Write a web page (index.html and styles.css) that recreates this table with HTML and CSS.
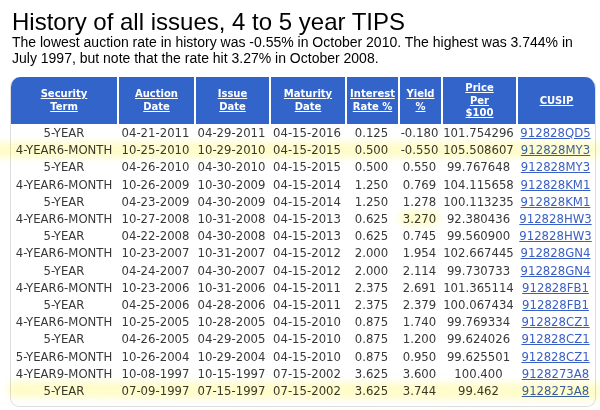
FILE: index.html
```html
<!DOCTYPE html>
<html lang="en">
<head>
<meta charset="utf-8">
<title>History of all issues, 4 to 5 year TIPS</title>
<link rel="stylesheet" href="styles.css">
</head>
<body>
<div class="page">
  <h1 class="title">History of all issues, 4 to 5 year TIPS</h1>
  <p class="intro">The lowest auction rate in history was -0.55% in October 2010. The highest was 3.744% in<br>July 1997, but note that the rate hit 3.27% in October 2008.</p>
  <div class="table-wrap">
    <table class="issues">
      <colgroup>
        <col class="c-term"><col class="c-auction"><col class="c-issue"><col class="c-maturity">
        <col class="c-rate"><col class="c-yield"><col class="c-price"><col class="c-cusip">
      </colgroup>
      <thead>
        <tr>
          <th><a href="#">Security<br>Term</a></th>
          <th><a href="#">Auction<br>Date</a></th>
          <th><a href="#">Issue<br>Date</a></th>
          <th><a href="#">Maturity<br>Date</a></th>
          <th><a href="#">Interest<br>Rate %</a></th>
          <th><a href="#">Yield<br>%</a></th>
          <th><a href="#">Price<br>Per<br>$100</a></th>
          <th><a href="#">CUSIP</a></th>
        </tr>
      </thead>
      <tbody>
        <tr><td>5-YEAR</td><td>04-21-2011</td><td>04-29-2011</td><td>04-15-2016</td><td>0.125</td><td>-0.180</td><td>101.754296</td><td><a href="#">912828QD5</a></td></tr>
        <tr><td>4-YEAR6-MONTH</td><td>10-25-2010</td><td>10-29-2010</td><td>04-15-2015</td><td>0.500</td><td>-0.550</td><td>105.508607</td><td><a href="#">912828MY3</a></td></tr>
        <tr><td>5-YEAR</td><td>04-26-2010</td><td>04-30-2010</td><td>04-15-2015</td><td>0.500</td><td>0.550</td><td>99.767648</td><td><a href="#">912828MY3</a></td></tr>
        <tr><td>4-YEAR6-MONTH</td><td>10-26-2009</td><td>10-30-2009</td><td>04-15-2014</td><td>1.250</td><td>0.769</td><td>104.115658</td><td><a href="#">912828KM1</a></td></tr>
        <tr><td>5-YEAR</td><td>04-23-2009</td><td>04-30-2009</td><td>04-15-2014</td><td>1.250</td><td>1.278</td><td>100.113235</td><td><a href="#">912828KM1</a></td></tr>
        <tr><td>4-YEAR6-MONTH</td><td>10-27-2008</td><td>10-31-2008</td><td>04-15-2013</td><td>0.625</td><td>3.270</td><td>92.380436</td><td><a href="#">912828HW3</a></td></tr>
        <tr><td>5-YEAR</td><td>04-22-2008</td><td>04-30-2008</td><td>04-15-2013</td><td>0.625</td><td>0.745</td><td>99.560900</td><td><a href="#">912828HW3</a></td></tr>
        <tr><td>4-YEAR6-MONTH</td><td>10-23-2007</td><td>10-31-2007</td><td>04-15-2012</td><td>2.000</td><td>1.954</td><td>102.667445</td><td><a href="#">912828GN4</a></td></tr>
        <tr><td>5-YEAR</td><td>04-24-2007</td><td>04-30-2007</td><td>04-15-2012</td><td>2.000</td><td>2.114</td><td>99.730733</td><td><a href="#">912828GN4</a></td></tr>
        <tr><td>4-YEAR6-MONTH</td><td>10-23-2006</td><td>10-31-2006</td><td>04-15-2011</td><td>2.375</td><td>2.691</td><td>101.365114</td><td><a href="#">912828FB1</a></td></tr>
        <tr><td>5-YEAR</td><td>04-25-2006</td><td>04-28-2006</td><td>04-15-2011</td><td>2.375</td><td>2.379</td><td>100.067434</td><td><a href="#">912828FB1</a></td></tr>
        <tr><td>4-YEAR6-MONTH</td><td>10-25-2005</td><td>10-28-2005</td><td>04-15-2010</td><td>0.875</td><td>1.740</td><td>99.769334</td><td><a href="#">912828CZ1</a></td></tr>
        <tr><td>5-YEAR</td><td>04-26-2005</td><td>04-29-2005</td><td>04-15-2010</td><td>0.875</td><td>1.200</td><td>99.624026</td><td><a href="#">912828CZ1</a></td></tr>
        <tr><td>5-YEAR6-MONTH</td><td>10-26-2004</td><td>10-29-2004</td><td>04-15-2010</td><td>0.875</td><td>0.950</td><td>99.625501</td><td><a href="#">912828CZ1</a></td></tr>
        <tr><td>4-YEAR9-MONTH</td><td>10-08-1997</td><td>10-15-1997</td><td>07-15-2002</td><td>3.625</td><td>3.600</td><td>100.400</td><td><a href="#">9128273A8</a></td></tr>
        <tr><td>5-YEAR</td><td>07-09-1997</td><td>07-15-1997</td><td>07-15-2002</td><td>3.625</td><td>3.744</td><td>99.462</td><td><a href="#">9128273A8</a></td></tr>
      </tbody>
    </table>
  </div>
  <span class="marker marker-low"></span>
  <span class="marker marker-2008"></span>
  <span class="marker marker-high"></span>
</div>
</body>
</html>
```
FILE: styles.css
```css
html, body {
  margin: 0;
  padding: 0;
  background: #ffffff;
}

.page {
  position: relative;
  width: 600px;
  height: 410px;
  overflow: hidden;
  padding: 8px 0 0 10px;
  box-sizing: border-box;
  font-family: "Liberation Sans", Arial, sans-serif;
  color: #000;
}

.title {
  margin: 0;
  padding-left: 2px;
  font-size: 24px;
  line-height: 27px;
  font-weight: normal;
}

.intro {
  margin: -1.5px 0 0;
  padding-left: 2px;
  font-size: 14px;
  line-height: 16px;
  white-space: nowrap;
}

.table-wrap {
  margin-top: 11.5px;
  width: 586px;
  box-sizing: border-box;
  border: 1px solid #dedede;
  border-top: 0;
  border-radius: 10px 11px 9px 9px;
  overflow: hidden;
  padding-bottom: 6px;
}

.issues {
  width: 584px;
  table-layout: fixed;
  border-collapse: separate;
  border-spacing: 0;
  font-family: "DejaVu Sans", Verdana, sans-serif;
}

.c-term { width: 106px; }
.c-auction { width: 77px; }
.c-issue { width: 75px; }
.c-maturity { width: 76px; }
.c-rate { width: 53px; }
.c-yield { width: 43px; }
.c-price { width: 75px; }
.c-cusip { width: 79px; }

.issues th {
  background: #3264c9;
  color: #fff;
  font-size: 10px;
  font-weight: bold;
  line-height: 12.5px;
  padding: 5px 0 4.5px;
  text-align: center;
  vertical-align: middle;
  border-left: 2px solid #fff;
  box-sizing: border-box;
}

.issues th:first-child {
  border-left: 0;
}

.issues th a {
  color: #fff;
  text-decoration: underline;
}

.issues td {
  height: 17.2px;
  padding: 0;
  font-size: 11.7px;
  line-height: 17.2px;
  color: #383838;
  text-align: center;
  white-space: nowrap;
}

.issues tbody tr:first-child td {
  padding-top: 1px;
}

.issues td a {
  color: #3a5fc4;
  text-decoration: underline;
}

.marker {
  position: absolute;
  display: block;
  background: rgba(255, 249, 150, 0.5);
  mix-blend-mode: multiply;
  filter: blur(3px);
  border-radius: 6px;
}

.marker-low {
  left: -6px;
  top: 142px;
  width: 606px;
  height: 16px;
}

.marker-2008 {
  left: 399px;
  top: 211px;
  width: 41px;
  height: 14px;
  border-radius: 7px;
}

.marker-high {
  left: 8px;
  top: 382px;
  width: 594px;
  height: 17px;
  transform: rotate(0.2deg);
}
```
